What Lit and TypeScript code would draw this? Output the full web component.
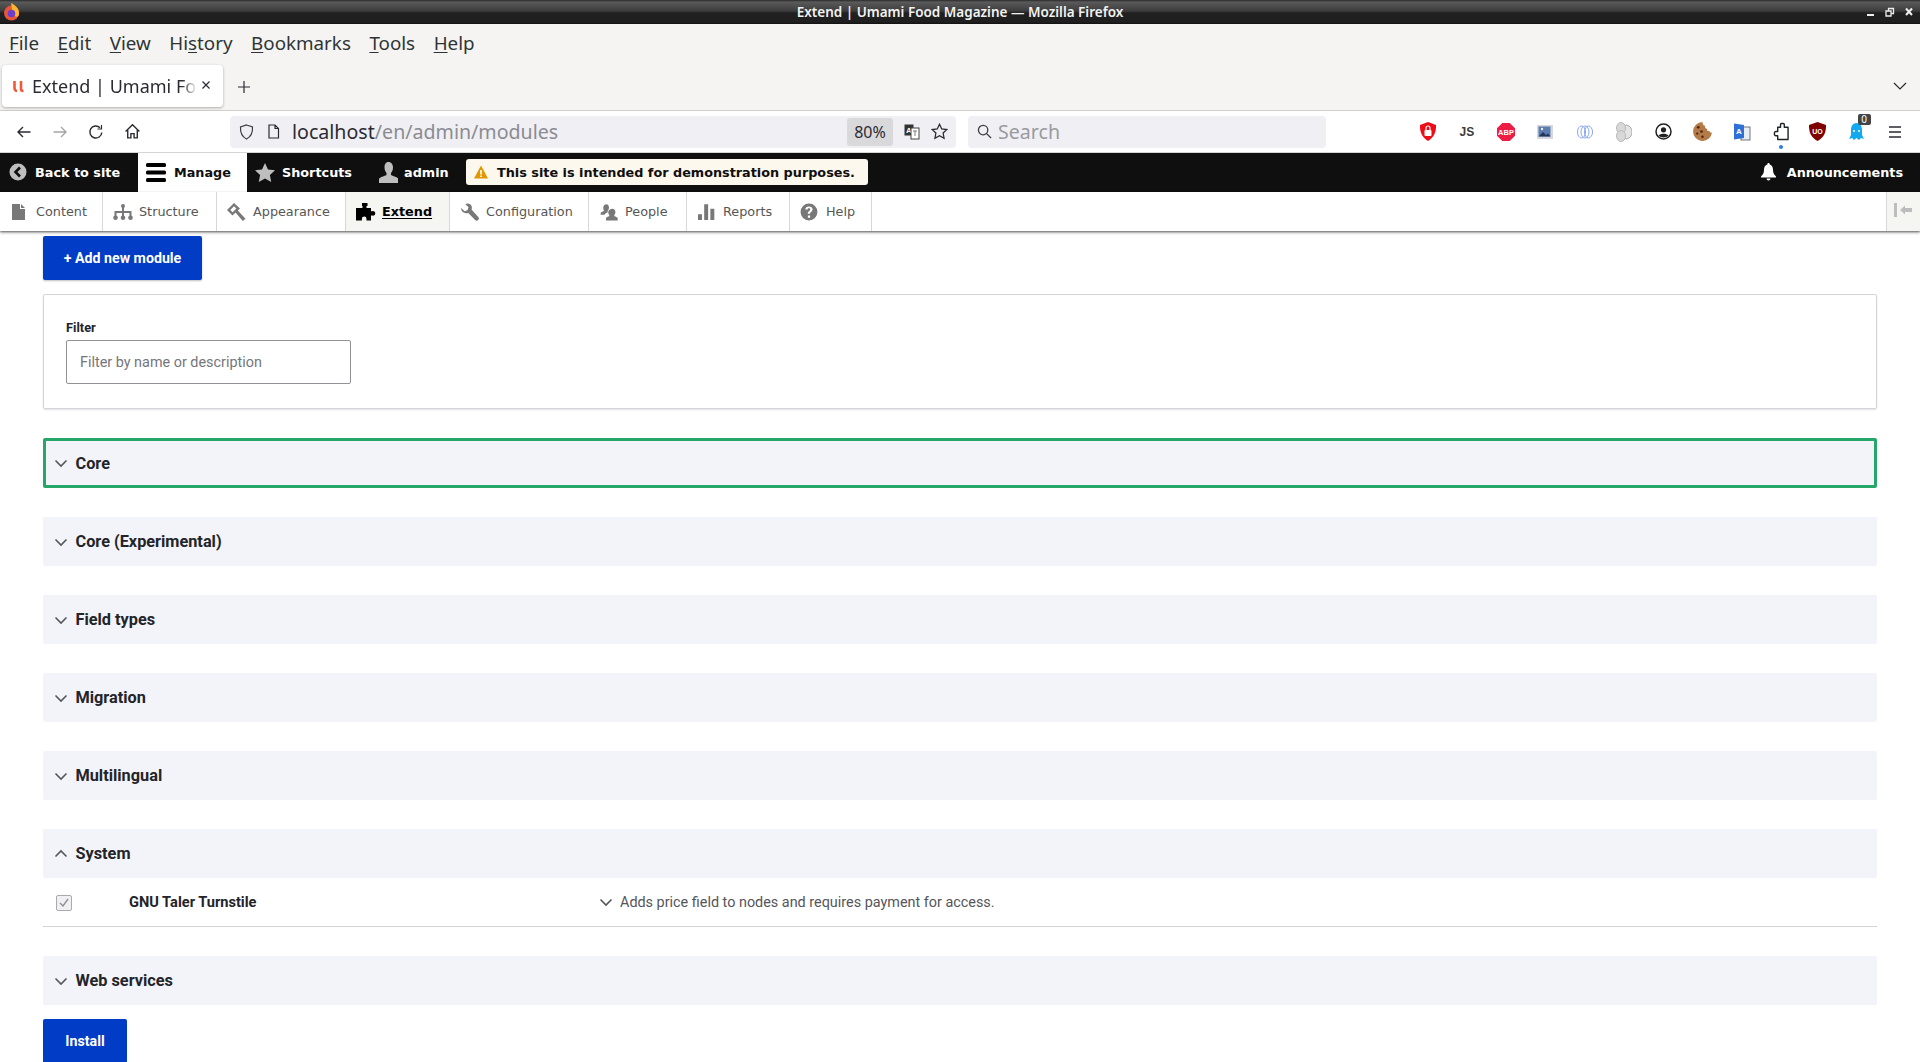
import { LitElement, html, css, svg } from 'lit';
import { customElement } from 'lit/decorators.js';

const MENU = [
  ['F', 'ile'], ['E', 'dit'], ['V', 'iew'], ['Hi', 's', 'tory'], ['B', 'ookmarks'], ['T', 'ools'], ['H', 'elp'],
];

const GRAY = '#787878';

// Drupal toolbar icons, drawn on a 20x18 box
const trayIcons: Record<string, unknown> = {
  content: svg`<path d="M2 1h8v5h5v11H2zM11 1l4 4h-4z"/>`,
  structure: svg`<circle cx="10" cy="3" r="2"/><path d="M9 4h2v4h7.500v5h-2V10H11v3H9v-3H3.500v3h-2V8H9z"/><circle cx="2.500" cy="14.800" r="2.300"/><circle cx="10" cy="14.800" r="2.300"/><circle cx="17.500" cy="14.800" r="2.300"/>`,
  appearance: svg`<path fill-rule="evenodd" d="M7 0 0 7l5.500 5.500 3-3L15.800 18 18.500 15.800 10.800 7.400 13 5.500zM7 3.200 3.300 7l2.400 2.300L9.300 5.500z"/>`,
  extend: svg`<path d="M6 0h5.500v3H10.500v2H15v3.200h1.300a2.300 2.300 0 1 1 0 4.400H15V17.500H10.500v-1.700a2.300 2.300 0 1 0-4.600 0v1.700H0V5h6.500V3H6z"/>`,
  config: svg`<g transform="translate(0 -0.500) scale(1.200 1.200)"><path d="M1 4.500 3.800 7.200l2.400-.8.900-2.400L4.400 1.300C6.500.3 9 1 9.700 3.200c.3 1 .2 1.800-.1 2.600l5.600 6.200a1.800 1.800 0 0 1-2.600 2.500L6.900 8.700C4 9.600.6 7.500 1 4.500z"/></g>`,
  people: svg`<g transform="translate(1 0) scale(1.125)"><path d="M5.500 1C7.300 1 8 2.600 8 4c0 1.300-.6 2.500-1.200 3l.1 1.200c-1.300.5-2.400 1.200-2.900 2.300H.6V8.800c.4-.9 2.400-1.300 3-2C3 6 2.800 5 2.900 4 3 2.400 4 1 5.500 1zM11 5c1.700 0 2.700 1.400 2.700 3 0 1.200-.5 2.200-1 2.800l.2 1c1 .4 2.500.8 2.800 1.700V15.500H5.300V13.500c.4-.9 1.800-1.300 2.800-1.700l.2-1c-.6-.6-1-1.600-1-2.800C7.300 6.400 9.300 5 11 5z"/></g>`,
  reports: svg`<g transform="translate(1 0) scale(1.125)"><path d="M0 10h3.500v5H0zM5.500 1H9v14H5.500zM11 5h3.500v10H11z"/></g>`,
  help: svg`<g transform="translate(0 0) scale(1.125)"><path fill-rule="evenodd" d="M8 .5a7.500 7.500 0 1 1 0 15 7.500 7.500 0 0 1 0-15zM7 11v2h2v-2zM8 3C6 3 4.800 4.100 4.700 5.800h2c.1-.7.500-1.100 1.200-1.100.7 0 1.200.4 1.200 1 0 1.300-2.200 1.500-2.200 3.800h2c0-1.700 2.300-2 2.300-4C11.200 4 9.800 3 8 3z"/></g>`,
};

const TRAY = [
  { key: 'content', label: 'Content', width: 103 },
  { key: 'structure', label: 'Structure', width: 114 },
  { key: 'appearance', label: 'Appearance', width: 129 },
  { key: 'extend', label: 'Extend', width: 104, active: true },
  { key: 'config', label: 'Configuration', width: 139 },
  { key: 'people', label: 'People', width: 98 },
  { key: 'reports', label: 'Reports', width: 103 },
  { key: 'help', label: 'Help', width: 82 },
];

const SECTIONS = ['Core', 'Core (Experimental)', 'Field types', 'Migration', 'Multilingual', 'System', 'Web services'];

const chevron = (up = false) => html`<svg class="chev" viewBox="0 0 14 14" width="14" height="14">
  <path d=${up ? 'M1.500 9.500 7 4l5.500 5.500' : 'M1.500 4.500 7 10l5.500-5.500'} fill="none" stroke="#55565b" stroke-width="1.600"/>
</svg>`;

@customElement('app-root')
export class AppRoot extends LitElement {
  static styles = css`
    :host {
      display: block;
      height: 1062px;
      overflow: hidden;
      background: #fff;
      font-family: 'Roboto', sans-serif;
    }

    /* window title */
    .titlebar {
      height: 24px;
      display: flex;
      align-items: center;
      justify-content: center;
      position: relative;
      background: linear-gradient(#2a2a2a 0, #5a5a5a 2px, #3c3c3c 11px, #202020 13px, #1f1f1f 22px, #111 24px);
      color: #f2f2f2;
      font: 600 13.500px 'Noto Sans', sans-serif;
    }
    .fxlogo { position: absolute; left: 3px; top: 3px; }
    .winbtns { position: absolute; right: 6px; top: 7px; display: flex; gap: 9px; }

    /* menu + tabs */
    .chrome { background: #f5f4f2; height: 87px; border-bottom: 1px solid #d0d0cd; box-sizing: border-box; }
    .menu {
      height: 37px;
      display: flex;
      gap: 18.500px;
      padding: 0 9px;
      align-items: center;
      font: 18.800px 'Noto Sans', sans-serif;
      color: #2e3436;
    }
    .menu u { text-underline-offset: 2px; }
    .tabs { display: flex; align-items: center; height: 49px; position: relative; }
    .tab {
      margin-left: 2px;
      width: 221px;
      height: 42px;
      margin-top: 1px;
      box-sizing: border-box;
      background: #fff;
      border-radius: 4px;
      box-shadow: 0 1px 3px rgba(0, 0, 0, 0.3);
      display: flex;
      align-items: center;
      padding-left: 10px;
      font: 18px 'Noto Sans', sans-serif;
      color: #2b2a33;
      position: relative;
      white-space: nowrap;
      overflow: hidden;
    }
    .tab .title { margin-left: 7px; width: 165px; overflow: hidden; -webkit-mask-image: linear-gradient(to right, #000 150px, transparent 165px); }
    .tab .close { position: absolute; right: 10px; top: 13px; }
    .newtab { margin-left: 14px; margin-top: 2px; }
    .alltabs { position: absolute; right: 13px; top: 20px; }

    /* nav bar */
    .nav {
      height: 42px;
      box-sizing: border-box;
      background: #fff;
      border-bottom: 1px solid #d5d5d2;
      display: flex;
      align-items: center;
      padding-left: 16px;
    }
    .nav > * { flex: none; }
    .navbtns { display: flex; align-items: center; gap: 20px; width: 214px; }
    .urlbar {
      width: 726px;
      height: 32px;
      background: #f0f0f4;
      border-radius: 4px;
      display: flex;
      align-items: center;
      padding-left: 9px;
      box-sizing: border-box;
      font: 19.600px 'Noto Sans', sans-serif;
      color: #8b8b91;
    }
    .urlbar .host { color: #2b2a33; }
    .urlbar .url { margin-left: 12px; width: 555px; white-space: nowrap; }
    .urlbar .page { margin-left: 13px; }
    .zoom {
      width: 46px;
      height: 28px;
      background: #d9d9dc;
      border-radius: 3px;
      display: flex;
      align-items: center;
      justify-content: center;
      font-size: 16px;
      color: #2b2a33;
    }
    .urlbar .trans { margin-left: 11px; }
    .urlbar .star { margin-left: 11px; }
    .searchbar {
      margin-left: 12px;
      width: 358px;
      height: 32px;
      background: #f0f0f4;
      border-radius: 4px;
      display: flex;
      align-items: center;
      padding-left: 9px;
      box-sizing: border-box;
      gap: 6px;
      font: 19.600px 'Noto Sans', sans-serif;
      color: #9a9aa0;
    }
    .exts { margin-left: 82px; display: flex; align-items: center; }
    .ext { width: 39.250px; height: 28px; display: flex; align-items: center; justify-content: center; position: relative; }
    .ext:nth-child(11) { margin-left: -2.500px; }
    .ext:last-child { margin-left: -1px; }
    .ext .js { font: 700 12px 'Liberation Sans', sans-serif; color: #3c3c3c; }
    .badge {
      position: absolute;
      right: 6px;
      top: -4px;
      background: #444;
      color: #fff;
      font: 10px 'Noto Sans', sans-serif;
      padding: 0 3.500px;
      border-radius: 2px;
      line-height: 11px;
    }
    .dot { position: absolute; bottom: -3px; left: 18px; width: 4px; height: 4px; background: #2a7de1; border-radius: 50%; }

    /* drupal toolbar */
    .bar {
      height: 39px;
      box-sizing: border-box;
      padding-bottom: 1px;
      background: #0f0f0f;
      display: flex;
      align-items: center;
      color: #fff;
      font: 700 12.800px 'DejaVu Sans', sans-serif;
      white-space: nowrap;
    }
    .bar svg { flex: none; }
    .bar .back { width: 138px; display: flex; align-items: center; gap: 8px; padding-left: 9px; box-sizing: border-box; }
    .bar .manage {
      width: 109px;
      align-self: stretch;
      margin-bottom: -1px;
      padding-bottom: 1px;
      background: #fff;
      color: #0f0f0f;
      display: flex;
      align-items: center;
      gap: 8px;
      padding-left: 8px;
      box-sizing: border-box;
    }
    .bar .shortcuts { display: flex; align-items: center; gap: 7px; margin-left: 8px; width: 114px; }
    .bar .shortcuts.user { width: 81px; margin-left: 10px; gap: 6px; }
    .warn {
      height: 26px;
      width: 402px;
      box-sizing: border-box;
      margin-left: 6px;
      background: #fdf8ed;
      border-radius: 3px;
      color: #0f0f0f;
      display: flex;
      align-items: center;
      gap: 9px;
      padding-left: 8px;
    }
    .announce { margin-left: auto; margin-right: 17px; display: flex; align-items: center; gap: 11px; }

    .tray {
      height: 39px;
      background: #fff;
      display: flex;
      box-shadow: 0 1px 2px rgba(0, 0, 0, 0.5), 0 2px 3px rgba(0, 0, 0, 0.2);
      position: relative;
      font: 12.800px 'DejaVu Sans', sans-serif;
      color: #565656;
      white-space: nowrap;
    }
    .tray .item {
      display: flex;
      align-items: center;
      box-sizing: border-box;
      border-right: 1px solid #d8d8d8;
      padding-left: 10px;
      gap: 6px;
    }
    .tray .item.active { background: #f5f5f2; color: #000; font-weight: 700; text-decoration: underline; text-underline-offset: 2px; }
    .tray .collapse {
      margin-left: auto;
      width: 34px;
      background: #f5f5f2;
      border-left: 1px solid #d8d8d8;
      display: flex;
      align-items: center;
      justify-content: center;
      padding-bottom: 3px;
      box-sizing: border-box;
    }

    /* page */
    main { padding: 5px 43px 0; }
    .btn {
      background: #003cc5;
      color: #fff;
      font-weight: 700;
      font-size: 14.200px;
      border-radius: 2px;
      display: flex;
      align-items: center;
      justify-content: center;
    }
    .add { width: 159px; height: 44px; box-shadow: 0 1px 2px rgba(0, 0, 0, 0.25); }
    .filter {
      margin-top: 14px;
      height: 115px;
      box-sizing: border-box;
      border: 1px solid #d3d4d9;
      border-radius: 2px;
      box-shadow: 0 1px 2px rgba(0, 0, 0, 0.12);
      padding: 26px 22px;
    }
    .filter label { display: block; font-size: 12.800px; font-weight: 700; color: #232429; line-height: 14px; margin-bottom: 5px; }
    .filter .input {
      width: 285px;
      height: 44px;
      box-sizing: border-box;
      border: 1px solid #919297;
      border-radius: 2px;
      display: flex;
      align-items: center;
      padding-left: 13px;
      font-size: 14.400px;
      color: #75767b;
    }
    .sections { margin-top: 29px; display: flex; flex-direction: column; }
    .section {
      height: 49px;
      margin-bottom: 29px;
      background: #f3f4f9;
      border-radius: 2px;
      display: flex;
      align-items: center;
      padding-left: 11px;
      gap: 7.500px;
      font-size: 16.300px;
      font-weight: 700;
      color: #232429;
    }
    .section.focus { height: 50px; margin-bottom: 29px; border: 3px solid #26a769; padding-left: 8px; box-sizing: border-box; }
    .section.open { margin-bottom: 0; }
    .chev { flex: none; }
    .module {
      height: 49px;
      margin-bottom: 29px;
      box-sizing: border-box;
      border-bottom: 1px solid #d3d4d9;
      display: grid;
      grid-template-columns: 86px 469.500px 21.500px 1fr;
      align-items: center;
      font-size: 14.400px;
      color: #55565b;
    }
    .module .name { font-weight: 700; font-size: 14.600px; color: #232429; }
    .module .check {
      margin-left: 13px;
      width: 16px;
      height: 16px;
      box-sizing: border-box;
      border: 1px solid #a9aab0;
      border-radius: 2px;
      background: #f0f0f2;
      display: flex;
      align-items: center;
      justify-content: center;
      margin-top: 1px;
    }
    .module .more { margin-top: 3px; }
    .install { width: 84px; height: 44px; margin-top: -15px; }
  `;

  renderNav() {
    return html`<div class="nav">
      <div class="navbtns">
        <svg width="16" height="16" viewBox="0 0 16 16" fill="none" stroke="#2b2a33" stroke-width="1.400"><path d="M14.500 8H2M7 3 2 8l5 5"/></svg>
        <svg width="16" height="16" viewBox="0 0 16 16" fill="none" stroke="#a5a5a8" stroke-width="1.400"><path d="M1.500 8H14M9 3l5 5-5 5"/></svg>
        <svg width="16" height="16" viewBox="0 0 16 16" fill="none" stroke="#2b2a33" stroke-width="1.400"><path d="M13.800 8.500A6 6 0 1 1 12 3.700"/><path d="M13.500 1v4h-4" stroke-width="1.200"/></svg>
        <svg width="17" height="17" viewBox="0 0 16 16" fill="none" stroke="#2b2a33" stroke-width="1.300"><path d="M1.500 8 8 1.700 14.500 8M3.500 6.500V14h3V10h3v4h3V6.500"/></svg>
      </div>
      <div class="urlbar">
        <svg width="15" height="16" viewBox="0 0 15 16" fill="none" stroke="#3c3c42" stroke-width="1.200"><path d="M7.500 1 13.500 3c.3 5-1.200 9.500-6 12C2.700 12.500 1.200 8 1.500 3z"/></svg>
        <svg class="page" width="13" height="15" viewBox="0 0 13 15" fill="none" stroke="#2b2a33" stroke-width="1.200"><path d="M2 1h6l3.500 3.500V14H2zM8 1v3.500h3.500"/></svg>
        <div class="url"><span class="host">localhost</span>/en/admin/modules</div>
        <div class="zoom">80%</div>
        <svg class="trans" width="16" height="16" viewBox="0 0 16 16"><rect x="0.500" y="0.500" width="9" height="11" fill="#333"/><text x="2" y="9" font-size="8" font-family="Liberation Sans" font-weight="700" fill="#fff">A</text><rect x="7" y="4" width="8" height="11" fill="#fff" stroke="#444"/><path d="M9 7h4M11 7v5" stroke="#777"/></svg>
        <svg class="star" width="17" height="17" viewBox="0 0 16 16" fill="none" stroke="#2b2a33" stroke-width="1.200"><path d="m8 1.200 2.100 4.400 4.800.6-3.500 3.300.9 4.800L8 12l-4.300 2.300.9-4.800L1.100 6.200l4.800-.6z"/></svg>
      </div>
      <div class="searchbar">
        <svg width="15" height="15" viewBox="0 0 16 16" fill="none" stroke="#3c3c42" stroke-width="1.400"><circle cx="6.500" cy="6.500" r="5"/><path d="m10 10 5 5"/></svg>
        <span>Search</span>
      </div>
      <div class="exts">
        <div class="ext"><svg width="16" height="19" viewBox="0 0 16 19"><path d="M8 0 16 3c.3 7-2 12.500-8 16C2 15.500-.3 10 0 3z" fill="#ee0d17"/><rect x="4.500" y="8" width="7" height="6" rx="1" fill="#fff"/><path d="M6 8V6a2 2 0 0 1 4 0v2" fill="none" stroke="#fff" stroke-width="1.200"/></svg></div>
        <div class="ext"><span class="js">JS</span></div>
        <div class="ext"><svg width="18" height="18" viewBox="0 0 18 18"><path d="M5.300 0h7.400L18 5.300v7.400L12.700 18H5.300L0 12.700V5.300z" fill="#ec1c44"/><text x="9" y="12" text-anchor="middle" font-size="7.500" font-weight="700" font-family="Liberation Sans" fill="#fff">ABP</text></svg></div>
        <div class="ext"><svg width="16" height="14" viewBox="0 0 16 14"><rect width="16" height="14" fill="#d5d9df"/><rect x="1.500" y="1.500" width="12" height="10" fill="#5c7cae"/><path d="M1.500 11.500 6 7l3 3 2-1.500 2.500 3z" fill="#22365c"/><circle cx="5" cy="4" r="1.200" fill="#e8edf5"/></svg></div>
        <div class="ext"><svg width="16" height="14" viewBox="0 0 16 14" fill="none" stroke="#7b9be8" stroke-width="0.900"><ellipse cx="4.500" cy="7" rx="4" ry="6"/><ellipse cx="8" cy="7" rx="4" ry="6"/><ellipse cx="11.500" cy="7" rx="4" ry="6"/></svg></div>
        <div class="ext"><svg width="16" height="20" viewBox="0 0 16 20"><ellipse cx="10" cy="10" rx="6" ry="7" fill="#e4e4e4" stroke="#aaa"/><ellipse cx="5" cy="6" rx="4.500" ry="5.500" fill="#d8d8d8" stroke="#bbb"/><ellipse cx="5" cy="14" rx="4.500" ry="5.500" fill="#d8d8d8" stroke="#bbb"/></svg></div>
        <div class="ext"><svg width="17" height="17" viewBox="0 0 17 17"><circle cx="8.500" cy="8.500" r="7.500" fill="#fff" stroke="#222" stroke-width="1.500"/><circle cx="8.500" cy="6.800" r="2.600" fill="#222"/><path d="M3.500 12.500c2-2.500 8-2.500 10 0-2 2.500-8 2.500-10 0z" fill="#222"/></svg></div>
        <div class="ext"><svg width="19" height="19" viewBox="0 0 18 18"><path d="M9 0a9 9 0 1 0 9 10c-1.500.5-2-.5-2.500-1.500C14 9 13 8 13.500 6.500 12 6.500 11 5 11.500 3.500 10 3.500 9 2 9 0z" fill="#b47a48"/><g fill="#4a2a14"><circle cx="5" cy="5" r="1.300"/><circle cx="8" cy="9" r="1.300"/><circle cx="4" cy="11" r="1.100"/><circle cx="9" cy="14" r="1.200"/></g></svg></div>
        <div class="ext"><svg width="18" height="18" viewBox="0 0 18 18"><rect x="8" y="4" width="9" height="13" fill="#e8eef8" stroke="#555" stroke-width="0.800"/><path d="M1 0.500 11 2v13l-10 1.500z" fill="#2f6fd8"/><text x="6" y="11" text-anchor="middle" font-size="8" font-weight="700" font-family="Liberation Sans" fill="#fff">A</text></svg></div>
        <div class="ext">
          <svg width="16" height="19" viewBox="0 0 17 19" fill="#fff" stroke="#1f2328" stroke-width="1.500"><path d="M9 1h2a1 1 0 0 1 1 1v3h4v13H5v-4H3a1.500 1.500 0 0 1-1.500-1.500V11A1.500 1.500 0 0 1 3 9.500h2V5h3V2a1 1 0 0 1 1-1z" stroke-linejoin="round"/></svg>
          <span class="dot"></span>
        </div>
        <div class="ext"><svg width="17" height="19" viewBox="0 0 17 19"><path d="M8.500 0 17 3c.2 7-2 12.500-8.500 16C2 15.500-.2 10 0 3z" fill="#800000"/><text x="8.500" y="12" text-anchor="middle" font-size="7" font-weight="700" font-family="Liberation Sans" fill="#fff">UO</text></svg></div>
        <div class="ext">
          <svg width="15" height="17" viewBox="0 0 15 17"><path d="M7.500 0C11 0 13 3 13 7v5l2 4-3-1-2 2-2.500-2-2.500 2-2-2-3 1 2-4V7c0-4 2-7 5.500-7z" fill="#12a9f0"/><circle cx="5" cy="8" r="1" fill="#fff"/><circle cx="10" cy="8" r="1" fill="#fff"/></svg>
          <span class="badge">0</span>
        </div>
        <div class="ext"><svg width="16" height="14" viewBox="0 0 16 14" stroke="#2b2a33" stroke-width="1.400"><path d="M2 2h12M2 7h12M2 12h12"/></svg></div>
      </div>
    </div>`;
  }

  renderToolbar() {
    return html`<div class="bar">
        <div class="back">
          <svg width="18" height="18" viewBox="0 0 18 18"><circle cx="9" cy="9" r="8.500" fill="#bebebe"/><path d="M11 4.500 6.500 9l4.500 4.500" fill="none" stroke="#0f0f0f" stroke-width="2.600"/></svg>
          Back to site
        </div>
        <div class="manage">
          <svg width="20" height="19" viewBox="0 0 20 19" fill="#000"><rect y="0" width="20" height="4" rx="1.500"/><rect y="7.500" width="20" height="4" rx="1.500"/><rect y="15" width="20" height="4" rx="1.500"/></svg>
          Manage
        </div>
        <div class="shortcuts">
          <svg width="20" height="19" viewBox="0 0 20 19"><path d="m10 0 3 6.400 7 .9-5.100 4.800 1.300 6.900L10 15.600 3.800 19l1.300-6.900L0 7.300l7-.9z" fill="#bebebe"/></svg>
          Shortcuts
        </div>
        <div class="shortcuts user">
          <svg width="19" height="21" viewBox="0 0 19 21"><path d="M9.500 0c3 0 4.500 2.500 4.500 5.500 0 2.500-1 4.500-2 5.500v2c2 1 6.500 2 7.500 4v4H0v-4c1-2 5.500-3 7.500-4v-2c-1-1-2-3-2-5.500C5.500 2.500 6.500 0 9.500 0z" fill="#bebebe"/></svg>
          admin
        </div>
        <div class="warn">
          <svg width="14" height="14" viewBox="0 0 14 14"><path d="M7 0.500 14 13.500H0z" fill="#e29700"/><path d="M7 5v4.500M7 10.500v1.500" stroke="#fff" stroke-width="1.600"/></svg>
          This site is intended for demonstration purposes.
        </div>
        <div class="announce">
          <svg width="15" height="18" viewBox="0 0 15 18" fill="#fff"><path d="M7.500 0c.8 0 1.200.6 1.200 1.500C11 2.200 12 4 12 7c0 3.500 1.500 5 3 6.500v1H0v-1C1.500 12 3 10.500 3 7c0-3 1-4.800 3.300-5.500C6.300.6 6.700 0 7.500 0zM5.500 15.500h4a2 2 0 0 1-4 0z"/></svg>
          Announcements
        </div>
      </div>
      <div class="tray">
        ${TRAY.map(
          (t) => html`<div class="item ${t.active ? 'active' : ''}" style="width:${t.width}px">
            <svg width="20" height="18" viewBox="0 0 20 18" fill=${t.active ? '#000' : GRAY}>${trayIcons[t.key]}</svg>
            <span>${t.label}</span>
          </div>`,
        )}
        <div class="collapse">
          <svg width="20" height="14" viewBox="0 0 20 14" fill="#bdbdbd"><rect x="0" y="0" width="3" height="14"/><path d="M6 7l5-4.500V5h7v4h-7v2.500z"/></svg>
        </div>
      </div>`;
  }

  renderPage() {
    return html`<main>
      <div class="btn add">+ Add new module</div>
      <div class="filter">
        <label>Filter</label>
        <div class="input">Filter by name or description</div>
      </div>
      <div class="sections">
        ${SECTIONS.map((name) => {
          const open = name === 'System';
          return html`<div class="section ${name === 'Core' ? 'focus' : ''} ${open ? 'open' : ''}">
              ${chevron(open)}<span>${name}</span>
            </div>
            ${open
              ? html`<div class="module">
                  <div class="check">
                    <svg width="10" height="10" viewBox="0 0 10 10" fill="none" stroke="#8b8c92" stroke-width="1.300"><path d="m1 5 3 3 5-7"/></svg>
                  </div>
                  <div class="name">GNU Taler Turnstile</div>
                  <div class="more">${chevron()}</div>
                  <div class="desc">Adds price field to nodes and requires payment for access.</div>
                </div>`
              : ''}`;
        })}
      </div>
      <div class="btn install">Install</div>
    </main>`;
  }

  render() {
    return html`
      <div class="titlebar">
        <svg class="fxlogo" width="17" height="18" viewBox="0 0 17 18">
          <circle cx="8.500" cy="10" r="7.500" fill="#e8553a"/>
          <path d="M8 0c4 2 8 5 8 10s-3 4-6 2z" fill="#ffb52e"/>
          <circle cx="8.500" cy="10.500" r="3.800" fill="#6a3fc9"/>
        </svg>
        Extend | Umami Food Magazine — Mozilla Firefox
        <div class="winbtns">
          <svg width="10" height="10" viewBox="0 0 10 10" stroke="#eee" stroke-width="2"><path d="M1 8h7"/></svg>
          <svg width="10" height="10" viewBox="0 0 10 10" fill="none" stroke="#eee" stroke-width="1.300"><path d="M1 4h5v5H1zM3.500 4V1.500h5v5H6"/></svg>
          <svg width="10" height="10" viewBox="0 0 10 10" stroke="#eee" stroke-width="2"><path d="m2 1.500 6 6.500M8 1.500 2 8"/></svg>
        </div>
      </div>
      <div class="chrome">
        <div class="menu">
          ${MENU.map((m) =>
            m.length === 3
              ? html`<span>${m[0]}<u>${m[1]}</u>${m[2]}</span>`
              : html`<span><u>${m[0]}</u>${m[1]}</span>`,
          )}
        </div>
        <div class="tabs">
          <div class="tab">
            <svg width="13" height="13" viewBox="0 0 13 13" fill="none" stroke="#f0593a" stroke-width="2.600"><path d="M2.500 1v7c0 2 1.500 3 2.500 3M9 1v8c0 1.500 1 2 2.500 2"/></svg>
            <span class="title">Extend | Umami Food Magazine</span>
            <svg class="close" width="14" height="14" viewBox="0 0 14 14" stroke="#2b2a33" stroke-width="1.200"><path d="m3.500 3.500 7 7M10.500 3.500l-7 7"/></svg>
          </div>
          <svg class="newtab" width="14" height="14" viewBox="0 0 14 14" stroke="#2b2a33" stroke-width="1.200"><path d="M7 1v12M1 7h12"/></svg>
          <svg class="alltabs" width="14" height="10" viewBox="0 0 14 10" fill="none" stroke="#2b2a33" stroke-width="1.200"><path d="m1 2 6 6 6-6"/></svg>
        </div>
      </div>
      ${this.renderNav()} ${this.renderToolbar()} ${this.renderPage()}
    `;
  }
}
